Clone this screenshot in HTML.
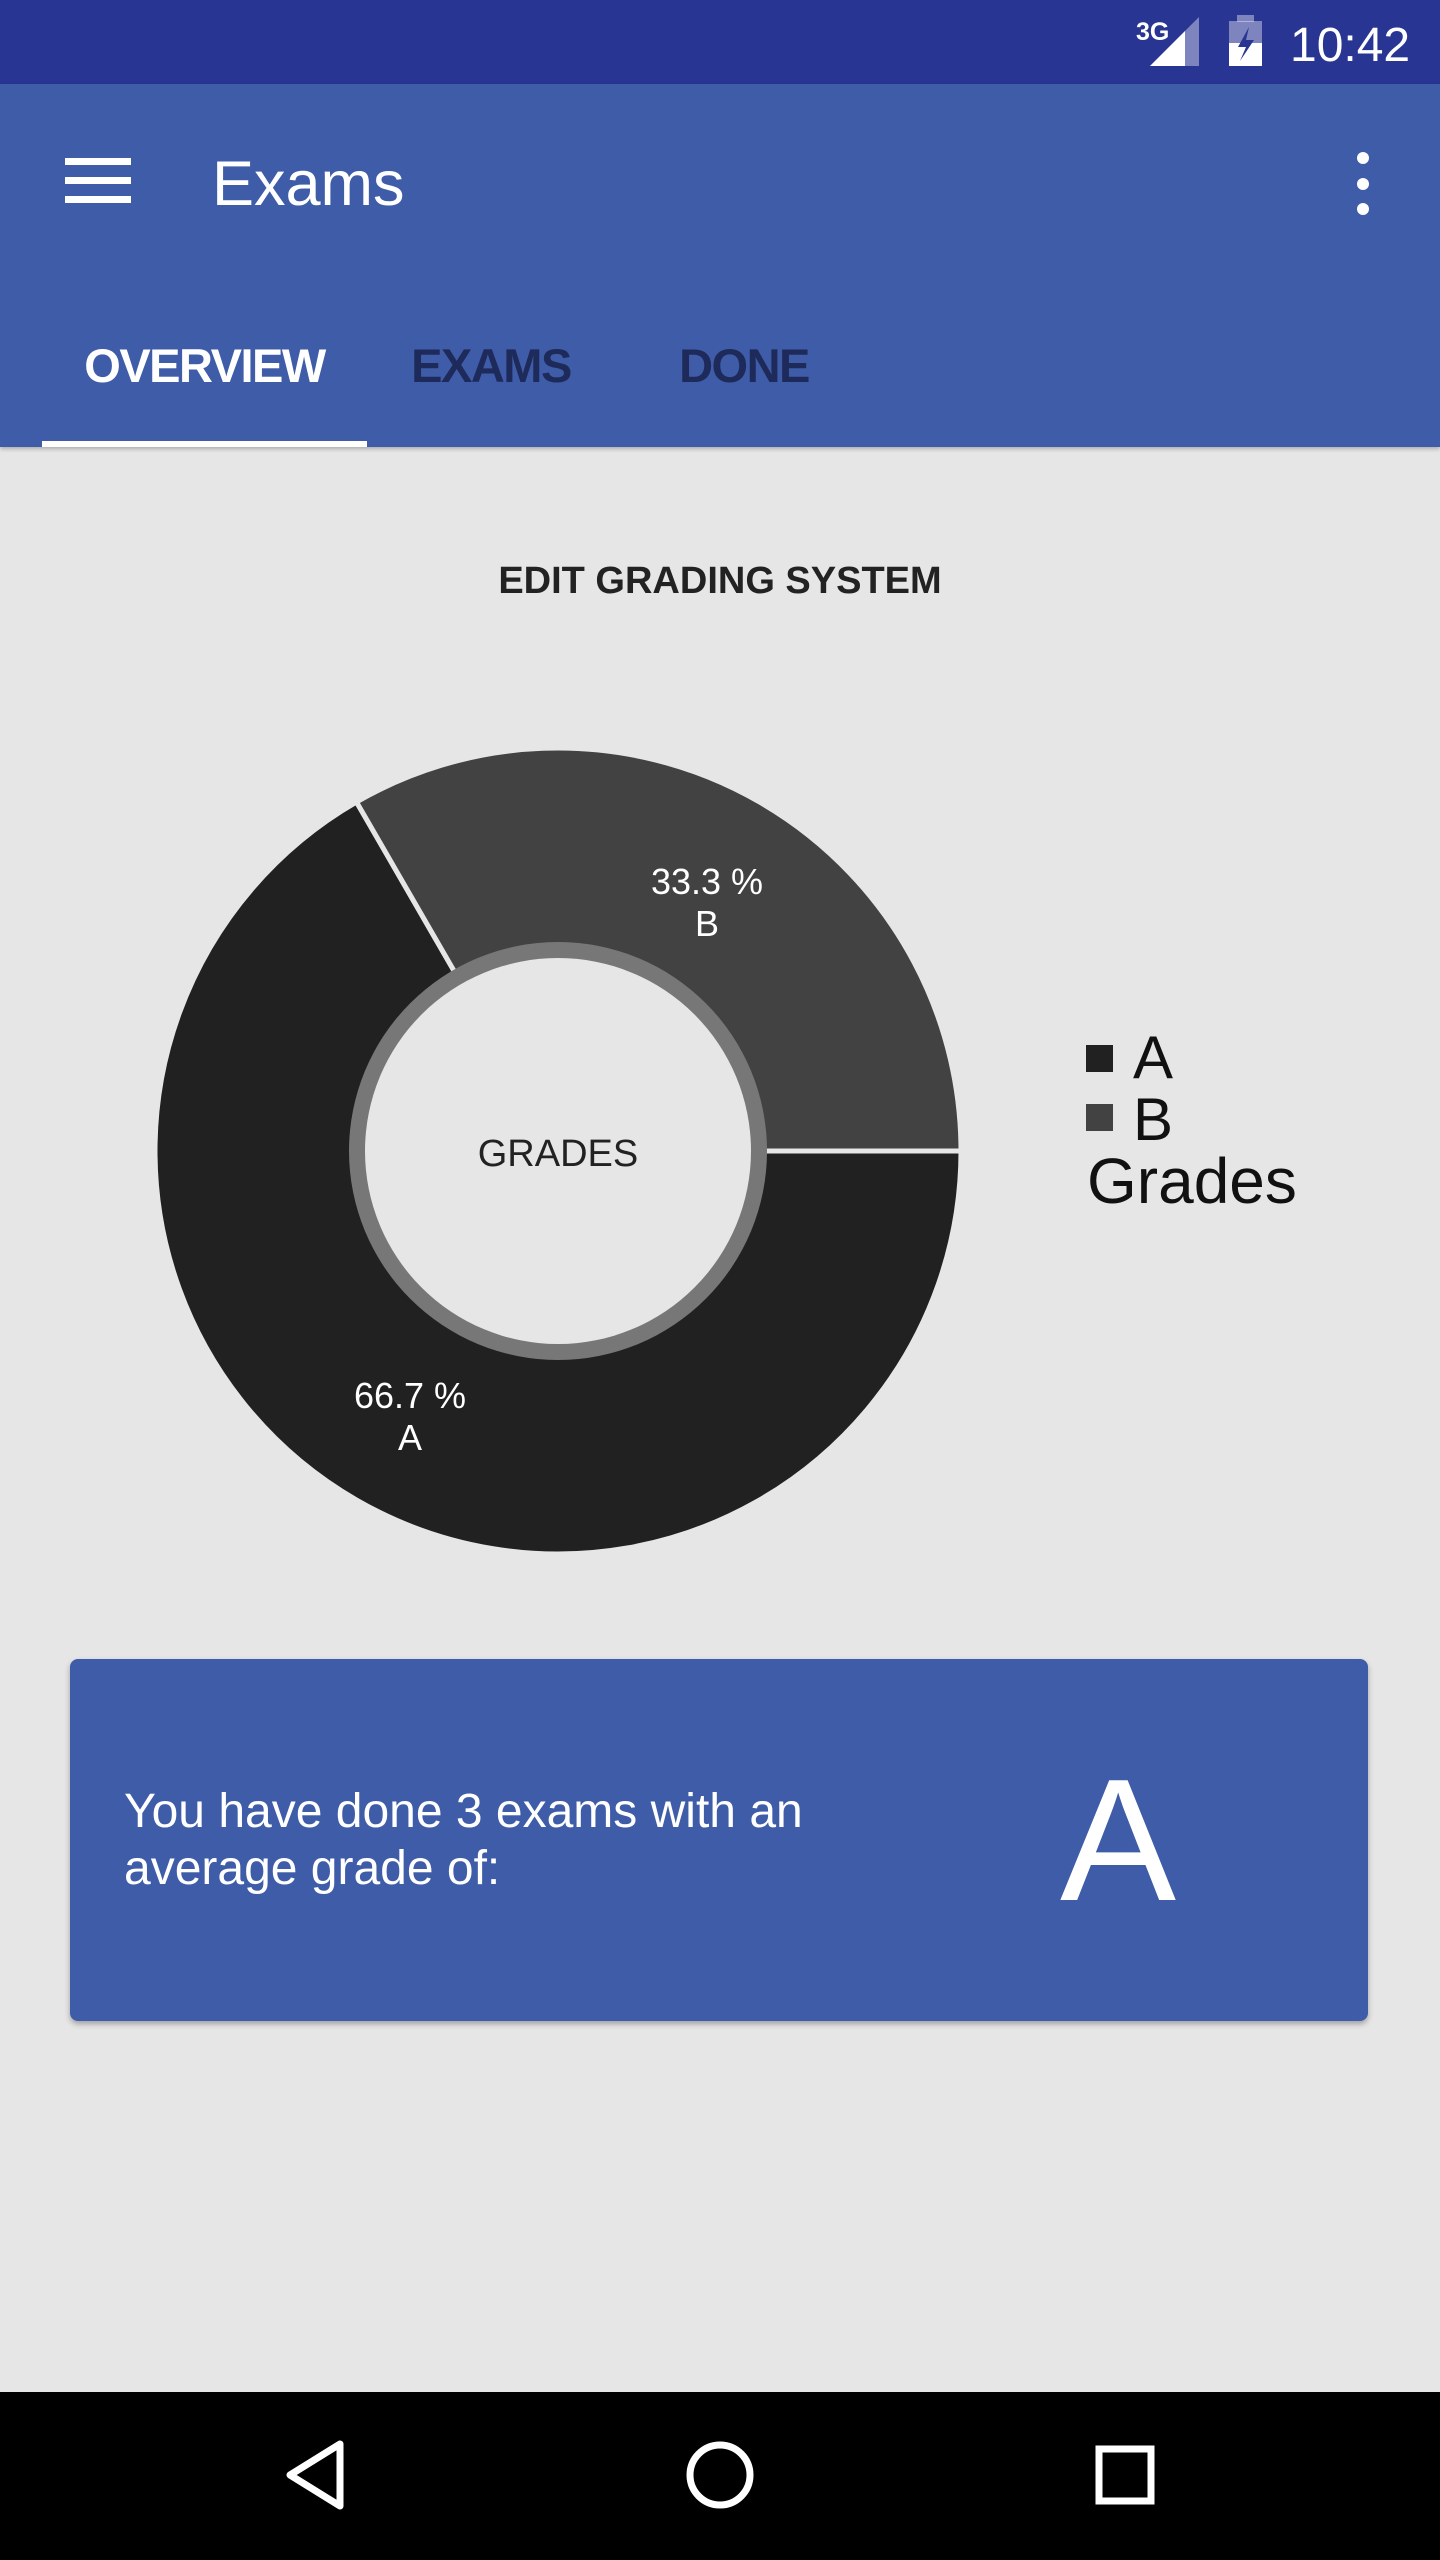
<!DOCTYPE html>
<html><head><meta charset="utf-8"><style>
*{margin:0;padding:0;box-sizing:border-box}
body{width:1440px;height:2560px;background:#E6E6E6;font-family:"Liberation Sans",sans-serif;position:relative;overflow:hidden}
.abs{position:absolute}
</style></head><body>
<div class="abs" style="left:0;top:0;width:1440px;height:84px;background:#283593"></div>
<svg class="abs" style="left:0;top:0" width="1440" height="84">
<text x="1136" y="40" fill="#fff" font-family="Liberation Sans" font-weight="bold" font-size="25">3G</text>
<polygon points="1199,17 1199,66 1150,66" fill="#fff" opacity="0.4"/>
<polygon points="1185,31 1185,66 1150,66" fill="#fff"/>
<rect x="1229" y="21" width="33" height="45" fill="#fff" opacity="0.4"/>
<rect x="1237" y="15" width="17" height="7" fill="#fff" opacity="0.4"/>
<rect x="1229" y="43" width="33" height="23" fill="#fff"/>
<polygon points="1249,27 1238,47 1246,47 1240,61 1254,40 1246,40" fill="#283593"/>
<text x="1290" y="61" fill="#fff" font-family="Liberation Sans" font-size="48">10:42</text>
</svg>
<div class="abs" style="left:0;top:84px;width:1440px;height:363px;background:#3F5CA8;box-shadow:0 2px 4px rgba(0,0,0,.25)"></div>
<div class="abs" style="left:65px;top:158px;width:66px;height:7px;background:#fff"></div>
<div class="abs" style="left:65px;top:177px;width:66px;height:7px;background:#fff"></div>
<div class="abs" style="left:65px;top:196px;width:66px;height:7px;background:#fff"></div>
<div class="abs" style="left:212px;top:144px;color:#fff;font-size:63px;line-height:80px">Exams</div>
<div class="abs" style="left:1357px;top:152px;width:12px;height:12px;border-radius:50%;background:#fff"></div>
<div class="abs" style="left:1357px;top:178px;width:12px;height:12px;border-radius:50%;background:#fff"></div>
<div class="abs" style="left:1357px;top:203px;width:12px;height:12px;border-radius:50%;background:#fff"></div>
<div class="abs" style="left:42px;top:336px;width:325px;text-align:center;color:#fff;font-size:47px;font-weight:bold;letter-spacing:-1.5px;line-height:60px">OVERVIEW</div>
<div class="abs" style="left:380px;top:336px;width:222px;text-align:center;color:#1E2A5A;font-size:47px;font-weight:bold;letter-spacing:-1.5px;line-height:60px">EXAMS</div>
<div class="abs" style="left:640px;top:336px;width:208px;text-align:center;color:#1E2A5A;font-size:47px;font-weight:bold;letter-spacing:-1.5px;line-height:60px">DONE</div>
<div class="abs" style="left:42px;top:441px;width:325px;height:6px;background:#fff"></div>
<div class="abs" style="left:0;top:556px;width:1440px;text-align:center;color:#222;font-size:38px;font-weight:bold;line-height:50px">EDIT GRADING SYSTEM</div>
<svg class="abs" style="left:0;top:0" width="1440" height="2400">
<path d="M558,1151 L961,1151 A403,403 0 1 1 356.5,802 Z" fill="#212121" stroke="#E6E6E6" stroke-width="5"/>
<path d="M558,1151 L356.5,802 A403,403 0 0 1 961,1151 Z" fill="#424242" stroke="#E6E6E6" stroke-width="5"/>
<circle cx="558" cy="1151" r="209" fill="#777"/>
<circle cx="558" cy="1151" r="193" fill="#E6E6E6"/>
<g font-family="Liberation Sans" font-size="36" fill="#fff" text-anchor="middle">
<text x="707" y="894">33.3 %</text><text x="707" y="936">B</text>
<text x="410" y="1408">66.7 %</text><text x="410" y="1450">A</text>
</g>
<text x="558" y="1166" font-family="Liberation Sans" font-size="38" fill="#222" text-anchor="middle">GRADES</text>
<rect x="1086" y="1045" width="27" height="27" fill="#212121"/>
<rect x="1086" y="1104" width="27" height="27" fill="#424242"/>
<text x="1133" y="1078" font-family="Liberation Sans" font-size="60" fill="#111">A</text>
<text x="1133" y="1140" font-family="Liberation Sans" font-size="60" fill="#111">B</text>
<text x="1087" y="1203" font-family="Liberation Sans" font-size="64" fill="#111">Grades</text>
</svg>
<div class="abs" style="left:70px;top:1659px;width:1298px;height:362px;background:#3F5CA8;border-radius:8px;box-shadow:0 3px 6px rgba(0,0,0,.3)"></div>
<div class="abs" style="left:124px;top:1783px;color:#fff;font-size:48px;line-height:57px">You have done 3 exams with an<br>average grade of:</div>
<div class="abs" style="left:1060px;top:1750px;color:#fff;font-size:174px;line-height:180px">A</div>
<div class="abs" style="left:0;top:2392px;width:1440px;height:168px;background:#000"></div>
<svg class="abs" style="left:0;top:2392px" width="1440" height="168">
<polygon points="340,52 340,114 290,83" fill="none" stroke="#fff" stroke-width="7" stroke-linejoin="round"/>
<circle cx="720" cy="83" r="30" fill="none" stroke="#fff" stroke-width="7"/>
<rect x="1099" y="57" width="52" height="52" fill="none" stroke="#fff" stroke-width="7"/>
</svg>
</body></html>
